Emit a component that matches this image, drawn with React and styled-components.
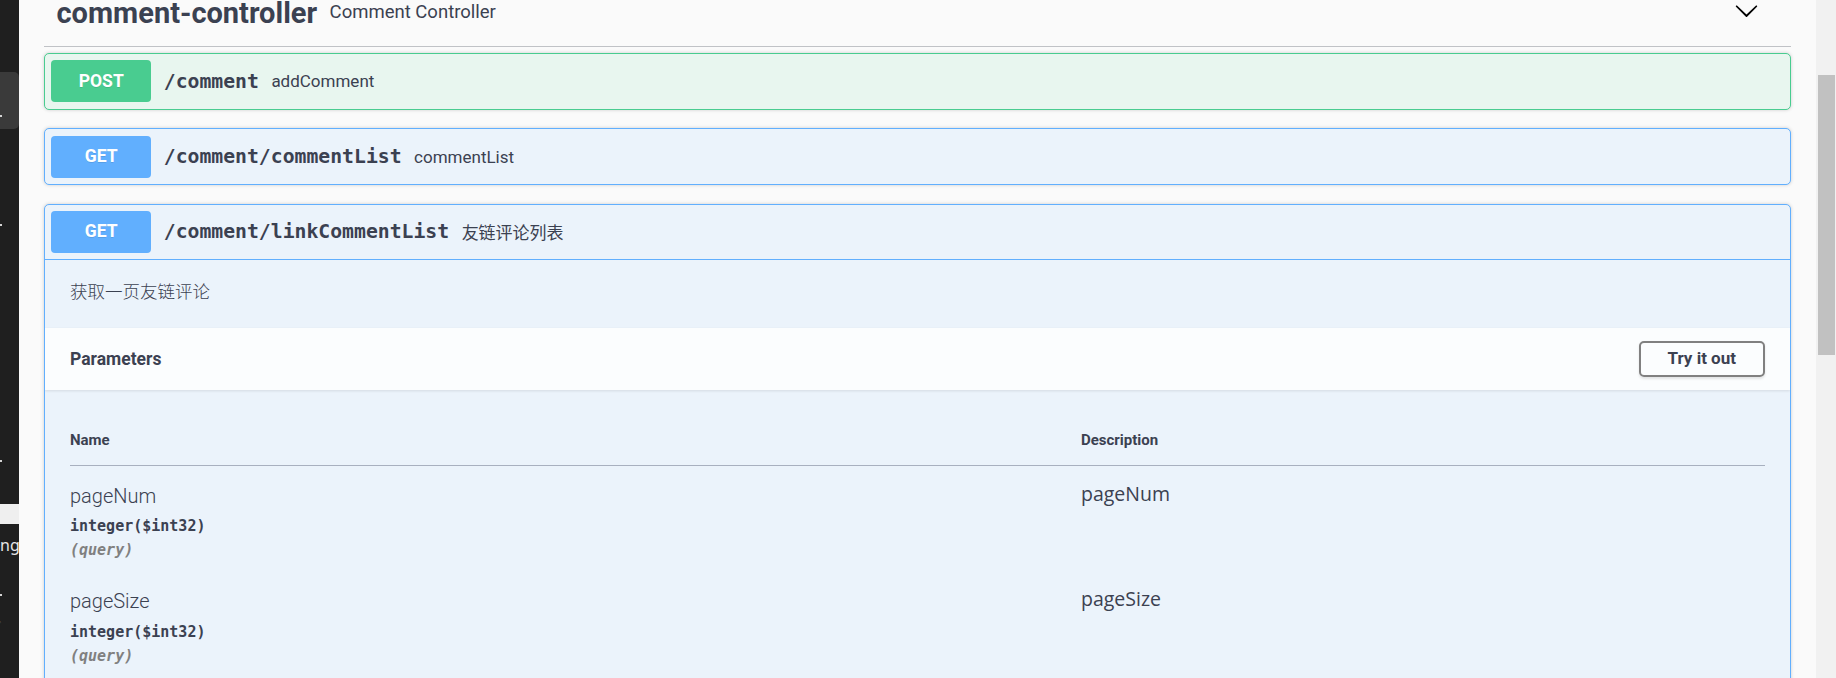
import styled, { createGlobalStyle } from "styled-components";

const TITLE_FONT = `Roboto, "Noto Sans CJK SC", sans-serif`;
const MONO_FONT = `"DejaVu Sans Mono", monospace`;

const Global = createGlobalStyle`
  html, body {
    margin: 0;
    padding: 0;
    height: 678px;
    overflow: hidden;
    background: #fafafa;
  }
  * { box-sizing: border-box; }
`;

const Screen = styled.div`
  display: flex;
  height: 678px;
  overflow: hidden;
`;

/* strip of the neighbouring dark window on the left */
const SideStrip = styled.div`
  width: 19px;
  flex-shrink: 0;
  background: #1f1f1f;
  display: flex;
  flex-direction: column;
  overflow: hidden;
  color: #e6e6e6;
  font-family: "Noto Sans", sans-serif;
`;

const SideBlock = styled.div`
  height: ${(p) => p.$h}px;
  margin-top: ${(p) => p.$top}px;
  background: ${(p) => p.$bg};
  border-radius: ${(p) => (p.$round ? "0 5px 5px 0" : "0")};
  display: flex;
  align-items: center;
  font-size: 16px;
  line-height: 1;
  white-space: nowrap;
`;

const Dot = styled.span`
  width: 2px;
  height: 2px;
  background: #d4d4d4;
  margin-top: ${(p) => p.$top}px;
  flex-shrink: 0;
`;

const Main = styled.main`
  flex: 1;
  min-width: 0;
  padding: 0 25px;
  background: #fafafa;
  color: #3b4151;
`;

const TagHeader = styled.div`
  display: flex;
  align-items: center;
  height: 67px;
  margin-top: -20px;
  margin-bottom: 6px;
  padding: 0 32px 0 12.5px;
  border-bottom: 1px solid rgba(59, 65, 81, 0.3);
`;

const TagTitle = styled.h3`
  margin: 0;
  font-family: ${TITLE_FONT};
  font-size: 29px;
  font-weight: 700;
  line-height: 36px;
  color: #3b4151;
`;

const TagSmall = styled.small`
  flex: 1;
  padding: 0 12.5px;
  margin-bottom: 3px;
  font-family: ${TITLE_FONT};
  font-size: 18.5px;
  color: #3b4151;
`;

const ExpandIcon = styled.svg`
  width: 25px;
  height: 25px;
  margin-bottom: 5px;
  flex-shrink: 0;
`;

const OpBlock = styled.div`
  margin-bottom: 18.75px;
  border: 1px solid ${(p) => p.$color};
  border-radius: 5px;
  background: ${(p) => p.$bg};
  box-shadow: 0 0 3.75px rgba(0, 0, 0, 0.19);
  overflow: hidden;
`;

const Summary = styled.div`
  display: flex;
  align-items: center;
  padding: 6.25px;
  border-bottom: ${(p) => (p.$open ? `1px solid ${p.$color}` : "none")};
`;

const Method = styled.span`
  min-width: 100px;
  padding: 7.5px 18.75px;
  border-radius: 4px;
  background: ${(p) => p.$color};
  color: #fff;
  font-family: ${TITLE_FONT};
  font-size: 17.5px;
  font-weight: 700;
  line-height: 27px;
  text-align: center;
  text-shadow: 0 1px 0 rgba(0, 0, 0, 0.1);
`;

const Path = styled.span`
  padding: 0 12.5px;
  font-family: ${MONO_FONT};
  font-size: 19.75px;
  font-weight: 700;
  color: #3b4151;
`;

const SummaryDesc = styled.div`
  flex: 1;
  font-family: ${TITLE_FONT};
  font-size: 17px;
  font-weight: 400;
  color: #3b4151;
`;

const DescriptionWrap = styled.div`
  padding: 19.5px 25px 18px;
  margin-bottom: 6.25px;
  font-family: ${TITLE_FONT};
  font-size: 17.5px;
  font-weight: 300;
  line-height: 24px;
  color: #3b4151;
`;

const SectionHeader = styled.div`
  display: flex;
  align-items: center;
  min-height: 62.5px;
  padding: 10px 25px;
  background: rgba(255, 255, 255, 0.8);
  box-shadow: 0 1.25px 2.5px rgba(0, 0, 0, 0.1);
`;

const SectionTitle = styled.h4`
  flex: 1;
  margin: 0;
  font-family: ${TITLE_FONT};
  font-size: 17.5px;
  font-weight: 700;
  color: #3b4151;
`;

const TryButton = styled.button`
  padding: 6.25px 27px;
  border: 2.5px solid #808080;
  border-radius: 5px;
  background: transparent;
  box-shadow: 0 1.25px 2.5px rgba(0, 0, 0, 0.1);
  font-family: ${TITLE_FONT};
  font-size: 17px;
  font-weight: 700;
  line-height: 19.5px;
  color: #3b4151;
`;

const TableContainer = styled.div`
  padding: 25px;
`;

const ParamGrid = styled.div`
  display: grid;
  grid-template-columns: 1011px 1fr;
`;

const HeadCell = styled.div`
  padding: 15px 0;
  border-bottom: 1px solid #a8b0bf;
  font-family: ${TITLE_FONT};
  font-size: 15px;
  font-weight: 700;
  line-height: 20px;
  color: #3b4151;
`;

const Cell = styled.div`
  padding: 12.5px 0;
`;

const ParamName = styled.div`
  padding-top: 3px;
  font-family: ${TITLE_FONT};
  font-size: 20px;
  font-weight: 300;
  line-height: 29px;
  color: #3b4151;
`;

const ParamType = styled.div`
  padding: 6.25px 0;
  font-family: ${MONO_FONT};
  font-size: 15px;
  font-weight: 700;
  color: #3b4151;
`;

const ParamIn = styled.div`
  font-family: ${MONO_FONT};
  font-size: 15px;
  font-weight: 700;
  font-style: italic;
  color: #808080;
`;

const ParamDesc = styled.p`
  margin: 0;
  font-family: "Open Sans", sans-serif;
  font-size: 19.5px;
  font-weight: 400;
  line-height: 30px;
  color: #3b4151;
`;

const ScrollTrack = styled.div`
  width: 20px;
  flex-shrink: 0;
  background: #f1f1f1;
  padding: 75px 1px 0 2px;
`;

const ScrollThumb = styled.div`
  height: 280px;
  background: #c1c1c1;
`;

const METHODS = {
  post: { color: "#49cc90", bg: "#e8f6ef" },
  get: { color: "#61affe", bg: "#ebf3fb" },
};

const operations = [
  { method: "post", path: "/comment", desc: "addComment" },
  { method: "get", path: "/comment/commentList", desc: "commentList" },
];

const params = [
  { name: "pageNum", type: "integer($int32)", where: "(query)" },
  { name: "pageSize", type: "integer($int32)", where: "(query)" },
];

const Chevron = () => (
  <ExpandIcon viewBox="0 0 20 20">
    <path
      fill="#000"
      d="M17.418 6.109c.272-.268.709-.268.979 0s.271.701 0 .969l-7.908 7.83c-.27.268-.707.268-.979 0l-7.908-7.83c-.27-.268-.27-.701 0-.969.271-.268.709-.268.979 0L10 13.25l7.418-7.141z"
    />
  </ExpandIcon>
);

const OpSummary = ({ method, path, desc, open }) => (
  <Summary $open={open} $color={METHODS[method].color}>
    <Method $color={METHODS[method].color}>{method.toUpperCase()}</Method>
    <Path>{path}</Path>
    <SummaryDesc>{desc}</SummaryDesc>
  </Summary>
);

export default function App() {
  return (
    <>
      <Global />
      <Screen>
        <SideStrip>
          <SideBlock $top={72} $h={57} $bg="#3a3a3a" $round>
            <Dot $top={30} />
          </SideBlock>
          <Dot $top={95} />
          <Dot $top={234} />
          <SideBlock $top={42} $h={20} $bg="#efefef" />
          <SideBlock $top={12} $h={18} $bg="transparent">
            ngl
          </SideBlock>
          <Dot $top={40} />
          <SideBlock $top={20} $h={12} $bg="transparent">
            <span style={{ marginLeft: -6, fontSize: 13 }}>◐</span>
          </SideBlock>
        </SideStrip>

        <Main>
          <TagHeader>
            <TagTitle>comment-controller</TagTitle>
            <TagSmall>Comment Controller</TagSmall>
            <Chevron />
          </TagHeader>

          {operations.map((op) => (
            <OpBlock
              key={op.path}
              $color={METHODS[op.method].color}
              $bg={METHODS[op.method].bg}
            >
              <OpSummary {...op} />
            </OpBlock>
          ))}

          <OpBlock $color={METHODS.get.color} $bg={METHODS.get.bg}>
            <OpSummary
              method="get"
              path="/comment/linkCommentList"
              desc="友链评论列表"
              open
            />
            <DescriptionWrap>获取一页友链评论</DescriptionWrap>
            <SectionHeader>
              <SectionTitle>Parameters</SectionTitle>
              <TryButton>Try it out</TryButton>
            </SectionHeader>
            <TableContainer>
              <ParamGrid>
                <HeadCell>Name</HeadCell>
                <HeadCell>Description</HeadCell>
                {params.map((p) => (
                  <>
                    <Cell key={p.name + "-n"}>
                      <ParamName>{p.name}</ParamName>
                      <ParamType>{p.type}</ParamType>
                      <ParamIn>{p.where}</ParamIn>
                    </Cell>
                    <Cell key={p.name + "-d"}>
                      <ParamDesc>{p.name}</ParamDesc>
                    </Cell>
                  </>
                ))}
              </ParamGrid>
            </TableContainer>
          </OpBlock>
        </Main>

        <ScrollTrack>
          <ScrollThumb />
        </ScrollTrack>
      </Screen>
    </>
  );
}
